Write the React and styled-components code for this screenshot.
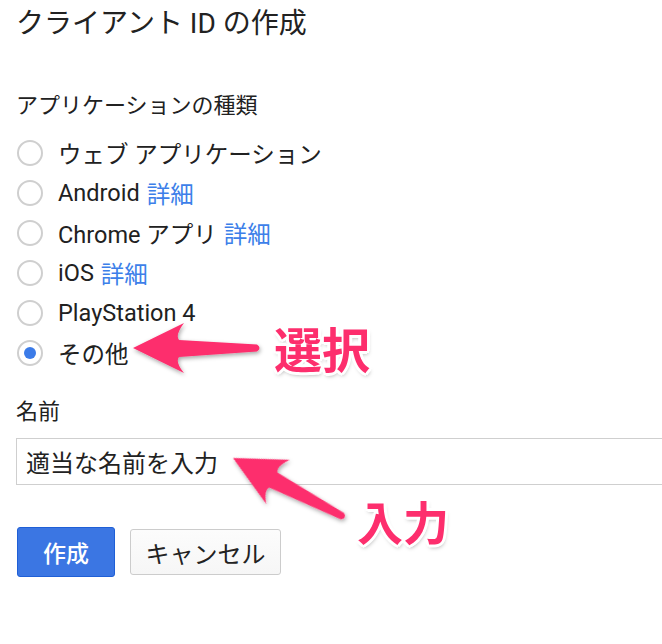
import styled, { createGlobalStyle } from "styled-components"

const GlobalStyle = createGlobalStyle`
  html, body {
    margin: 0;
    padding: 0;
    background: #fff;
    overflow: hidden;
  }
  body {
    font-family: Roboto, "Noto Sans CJK JP", sans-serif;
    color: #212121;
  }
`

const Page = styled.div`
  position: relative;
  width: 662px;
  height: 644px;
  padding: 6px 0 0 16px;
  box-sizing: border-box;
`

const Title = styled.h1`
  margin: 0;
  font-size: 28px;
  font-weight: 400;
  line-height: 36px;
  color: #222;
`

const SectionLabel = styled.div`
  font-size: 22px;
  line-height: 30px;
  margin-top: ${(p) => p.top}px;
`

const RadioList = styled.div`
  display: flex;
  flex-direction: column;
  margin-top: 12px;
`

const RadioRow = styled.label`
  display: flex;
  align-items: center;
  height: 40px;
  font-size: 23.5px;
`

const Circle = styled.span`
  width: 26px;
  height: 26px;
  box-sizing: border-box;
  border: 2px solid #cfcfcf;
  border-radius: 50%;
  display: flex;
  align-items: center;
  justify-content: center;
  margin: 0 15px 0 1px;
  &::after {
    content: "";
    width: 12px;
    height: 12px;
    border-radius: 50%;
    background: ${(p) => (p.checked ? "#3b7be8" : "transparent")};
  }
`

const Link = styled.span`
  color: #3d7fe9;
  margin-left: 7px;
`

const NameInput = styled.div`
  margin-top: 11px;
  width: 646px;
  height: 47px;
  box-sizing: border-box;
  border: 1px solid #cfcfcf;
  border-right: none;
  padding-left: 9px;
  display: flex;
  align-items: center;
  font-size: 24px;
  color: #222;
`

const Actions = styled.div`
  display: flex;
  align-items: center;
  gap: 15px;
  margin-top: 42px;
  margin-left: 1px;
`

const Button = styled.button`
  font-family: inherit;
  border-radius: 3px;
  box-sizing: border-box;
  cursor: pointer;
  padding: 0;
  ${(p) =>
    p.primary
      ? `
    width: 98px;
    height: 50px;
    font-size: 23px;
    background: #3b76e3;
    border: 1px solid #1f5fd6;
    color: #fff;
    font-weight: 500;
  `
      : `
    width: 151px;
    height: 46px;
    font-size: 24px;
    background: linear-gradient(#fcfcfc, #f6f6f6);
    border: 1px solid #cccccc;
    color: #222;
  `}
`

const Overlay = styled.svg`
  position: absolute;
  left: 0;
  top: 0;
  pointer-events: none;
`

const Callout = styled.div`
  position: absolute;
  left: ${(p) => p.x}px;
  top: ${(p) => p.y}px;
  font-family: "Noto Sans CJK JP", sans-serif;
  font-weight: 700;
  font-size: ${(p) => p.size}px;
  line-height: 1;
  color: #fd2e6d;
  text-shadow:
    3px 0 0 #fff, -3px 0 0 #fff, 0 3px 0 #fff, 0 -3px 0 #fff,
    2px 2px 0 #fff, -2px 2px 0 #fff, 2px -2px 0 #fff, -2px -2px 0 #fff,
    1px 3px 4px rgba(0, 0, 0, 0.35);
`

const arrowPath =
  "M0,0 L51,-25 Q42,-13 46,-8 L124,-3.5 Q129,0 124,3.5 L46,9 Q42,14 51,25 Z"

const options = [
  { label: "ウェブ アプリケーション" },
  { label: "Android", link: true },
  { label: "Chrome アプリ", link: true },
  { label: "iOS", link: true },
  { label: "PlayStation 4" },
  { label: "その他", checked: true },
]

export default function App() {
  return (
    <Page>
      <GlobalStyle />
      <Title>クライアント ID の作成</Title>
      <SectionLabel top={49}>アプリケーションの種類</SectionLabel>
      <RadioList>
        {options.map((o) => (
          <RadioRow key={o.label}>
            <Circle checked={o.checked} />
            {o.label}
            {o.link && <Link>詳細</Link>}
          </RadioRow>
        ))}
      </RadioList>
      <SectionLabel top={24}>名前</SectionLabel>
      <NameInput>適当な名前を入力</NameInput>
      <Actions>
        <Button primary>作成</Button>
        <Button>キャンセル</Button>
      </Actions>

      <Overlay width="662" height="644">
        <defs>
          <filter id="sh" x="-20%" y="-40%" width="140%" height="180%">
            <feDropShadow dx="1" dy="2" stdDeviation="2" floodColor="#000" floodOpacity="0.35" />
          </filter>
        </defs>
        <g filter="url(#sh)" fill="#fd2e6d">
          <path d={arrowPath} transform="translate(133,348)" />
          <path d={arrowPath} transform="translate(233,458) rotate(28)" />
        </g>
      </Overlay>
      <Callout x={274} y={323} size={48}>選択</Callout>
      <Callout x={357} y={497} size={46}>入力</Callout>
    </Page>
  )
}
